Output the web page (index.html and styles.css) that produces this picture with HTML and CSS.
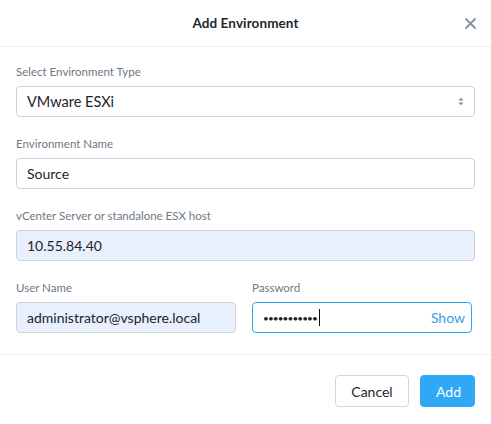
FILE: index.html
```html
<!DOCTYPE html>
<html>
<head>
<meta charset="utf-8">
<link rel="stylesheet" href="styles.css">
</head>
<body>
<div class="modal">
  <div class="header">
    <span></span>
    <h1 class="title">Add Environment</h1>
    <button class="close" aria-label="Close">
      <svg width="11" height="11" viewBox="0 0 11 11"><path d="M1 1L10 10M10 1L1 10" stroke="#8492a3" stroke-width="1.8" stroke-linecap="round"/></svg>
    </button>
  </div>
  <div class="body">
    <div class="field">
      <label class="label">Select Environment Type</label>
      <div class="input select">
        <span>VMware ESXi</span>
        <svg width="6" height="9" viewBox="0 0 6 9"><path d="M0.5 3.5L3 0.8L5.5 3.5Z M0.5 5.5L3 8.2L5.5 5.5Z" fill="#7b8794"/></svg>
      </div>
    </div>
    <div class="field">
      <label class="label">Environment Name</label>
      <div class="input">Source</div>
    </div>
    <div class="field">
      <label class="label">vCenter Server or standalone ESX host</label>
      <div class="input autofill">10.55.84.40</div>
    </div>
    <div class="row">
      <div class="field">
        <label class="label">User Name</label>
        <div class="input autofill">administrator@vsphere.local</div>
      </div>
      <div class="field">
        <label class="label">Password</label>
        <div class="input focus"><span class="dots">•••••••••••</span><span class="caret"></span><span class="show">Show</span></div>
      </div>
    </div>
  </div>
  <div class="footer">
    <button class="btn">Cancel</button>
    <button class="btn primary">Add</button>
  </div>
</div>
</body>
</html>
```
FILE: styles.css
```css
* { box-sizing: border-box; }
html, body { margin: 0; background: #fff; }
body { font-family: "Lato", "Open Sans", sans-serif; color: #22272e; }
.modal { width: 491px; }
.header {
  height: 47px;
  border-bottom: 1px solid #eceef1;
  display: grid;
  grid-template-columns: 1fr auto 1fr;
  align-items: center;
}
.title { margin: 0; font-size: 13.5px; font-weight: 700; color: #22272e; letter-spacing: 0.1px; }
.close { justify-self: end; margin-right: 15px; border: 0; background: none; padding: 0; width: 11px; height: 11px; display: flex; }
.body { padding: 18px 16px 21px; display: flex; flex-direction: column; gap: 20px; }
.field { display: flex; flex-direction: column; }
.label { font-size: 11.5px; line-height: 14px; color: #6e7986; margin-bottom: 7px; }
.input {
  height: 31px;
  border: 1px solid #cdd3da;
  border-radius: 4px;
  padding: 0 10px;
  font-size: 14px;
  display: flex;
  align-items: center;
  color: #1f2328;
}
.select { justify-content: space-between; padding-right: 10px; font-size: 14.5px; }
.autofill { background: #e8f0fe; }
.focus { border-color: #2aa8f2; padding-right: 6px; }
.row { display: grid; grid-template-columns: 220px 220px; gap: 16px; }
.dots { font-size: 10px; letter-spacing: -0.9px; }
.caret { width: 1px; height: 17px; background: #111; margin-left: 2px; }
.show { margin-left: auto; color: #3aa0e6; font-size: 14px; }
.footer {
  border-top: 1px solid #eceef1;
  padding: 20px 16px;
  display: flex;
  justify-content: flex-end;
  gap: 11px;
}
.btn {
  height: 32px;
  border: 1px solid #d2d7dd;
  border-radius: 4px;
  background: #fff;
  font-family: "Lato", sans-serif;
  font-size: 14px;
  color: #22272e;
  padding: 0 15px;
  width: 74px;
}
.primary { background: #2fa8f5; border-color: #2fa8f5; color: #fff; width: 55px; }
```
